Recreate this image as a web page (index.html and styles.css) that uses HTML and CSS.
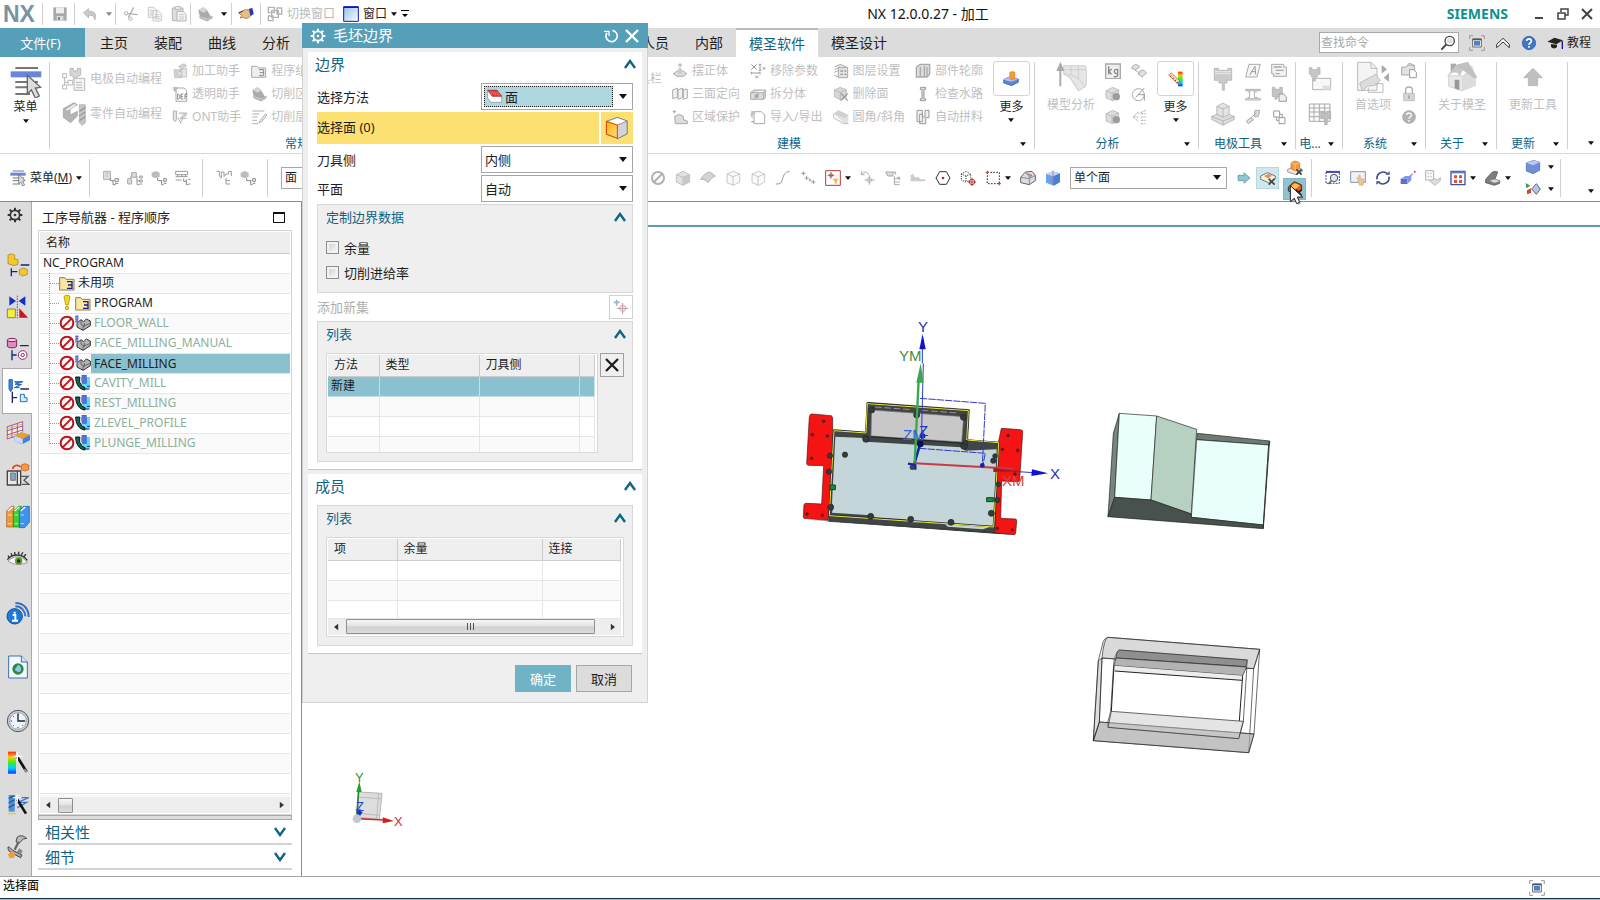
FILE: index.html
```html
<!DOCTYPE html>
<html lang="zh-CN">
<head>
<meta charset="utf-8">
<title>NX 12.0.0.27 - 加工</title>
<link rel="stylesheet" href="styles.css">
</head>
<body>
<svg class="defs" aria-hidden="true">
<defs>
<linearGradient id="gBlue" x1="0" y1="0" x2="1" y2="1"><stop offset="0" stop-color="#8fc0ee"/><stop offset="1" stop-color="#fff"/></linearGradient>
<linearGradient id="gRain" x1="0" y1="0" x2="0" y2="1"><stop offset="0" stop-color="#f22"/><stop offset=".25" stop-color="#fc0"/><stop offset=".5" stop-color="#3e3"/><stop offset=".75" stop-color="#0cf"/><stop offset="1" stop-color="#13f"/></linearGradient>
<linearGradient id="gOr" x1="0" y1="0" x2="1" y2="1"><stop offset="0" stop-color="#ffb400"/><stop offset="1" stop-color="#ffe08a"/></linearGradient>
</defs>
<symbol id="down" viewBox="0 0 8 5"><path d="M0 0h8L4 5z" fill="currentColor"/></symbol>
<symbol id="chevU" viewBox="0 0 12 10"><path d="M1 9L6 2l5 7" fill="none" stroke="#0f6385" stroke-width="2.4"/></symbol>
<symbol id="chevD" viewBox="0 0 12 10"><path d="M1 1l5 7 5-7" fill="none" stroke="#0f6385" stroke-width="2.4"/></symbol>
<symbol id="save" viewBox="0 0 48 48"><path d="M4 4h40v40H4z" fill="#a8a8a8"/><path d="M12 4h24v18H12z" fill="#eee"/><path d="M14 30h20v14H14z" fill="#ddd"/><path d="M18 33h6v9h-6z" fill="#888"/></symbol>
<symbol id="undo" viewBox="0 0 48 48"><path d="M4 20L20 8v8c16-2 26 8 18 26 0-10-8-16-18-14v8z" fill="#c9c9c9" stroke="#aaa" stroke-width="2"/></symbol>
<symbol id="cut" viewBox="0 0 48 48"><path d="M12 22l32 4M16 34L32 4" stroke="#b0b0b0" stroke-width="4"/><circle cx="9" cy="22" r="5" fill="none" stroke="#b0b0b0" stroke-width="3"/><circle cx="22" cy="38" r="5" fill="none" stroke="#b0b0b0" stroke-width="3"/></symbol>
<symbol id="copy" viewBox="0 0 48 48"><g fill="#f4f4f4" stroke="#b5b5b5" stroke-width="2"><path d="M4 4h16l8 8v22H4zM18 14h16l9 9v22H18z"/><path d="M9 14h8m-8 7h8m-8 6h8M24 26h12m-12 6h14m-14 6h14"/></g></symbol>
<symbol id="paste" viewBox="0 0 48 48"><g fill="#f4f4f4" stroke="#b5b5b5" stroke-width="3"><path d="M4 6h32v38H4z" fill="#ddd"/><path d="M12 2h16v8H12zM18 16h18l9 9v20H18z"/><path d="M24 26h14m-14 7h15m-15 6h15" stroke-width="2"/></g></symbol>
<symbol id="block" viewBox="0 0 48 48"><path d="M4 12l16-8 10 8 12 20-12 6L8 30z" fill="#aaa"/><path d="M4 12l16-8 10 10-10 6z" fill="#d5d5d5"/><path d="M28 40l18-10v6L30 46 8 36v-6z" fill="#bbb" stroke="#999" stroke-width="1"/></symbol>
<symbol id="hand" viewBox="0 0 48 48"><path d="M2 22c12-8 20-14 32-10l4 18c-8 8-16 10-22 4L6 36l6-8z" fill="#e9bd84" stroke="#8a6128" stroke-width="2"/><path d="M2 20l12-4" stroke="#333" stroke-width="3"/><path d="M33 8l10-2 4 18-9 6z" fill="#2934b4"/></symbol>
<symbol id="wins" viewBox="0 0 48 48"><g fill="#fff" stroke="#b4b4b4" stroke-width="4"><path d="M4 4h18v16H4zM30 6h14v18H30zM4 30h14v14H4zM14 14h20v20H14z"/></g></symbol>
<symbol id="win" viewBox="0 0 48 48"><path d="M2 2h44v44H2z" fill="url(#gBlue)" stroke="#1018b8" stroke-width="3"/><path d="M2 4h44" stroke="#1018b8" stroke-width="4"/></symbol>
<symbol id="menu" viewBox="0 0 48 48"><path d="M8 3h34M8 24h34M8 32h34M8 42h22" stroke="#777" stroke-width="3"/><path d="M1 8h46v9H1z" fill="#6a86da"/><path d="M26 14l20 18-8 1 6 12-6 3-6-12-6 6z" fill="#ddd" stroke="#666" stroke-width="2"/></symbol>
<symbol id="eprog" viewBox="0 0 72 72"><g fill="#d6d6d6" stroke="#b8b8b8" stroke-width="3"><path d="M24 4h10v8h12V4h10v20l-12 6v10h-8V30l-12-6z"/><path d="M36 34h32v36H36z" fill="#f4f4f4"/><path d="M2 20h12v12H2zM2 54h12v12H2zM18 40h14v14H18zM8 32v22M8 46h10M42 46h18m-18 8h18m-18 8h18" fill="none"/></g></symbol>
<symbol id="pprog" viewBox="0 0 72 72"><path d="M4 20L36 2l10 6-22 14v18l22-12v14L26 62 4 46z" fill="#b5b5b5" stroke="#999" stroke-width="2"/><path d="M14 24L40 8" stroke="#eee" stroke-width="6"/><path d="M52 8h18v54l-9 8-9-8z" fill="#c6c6c6" stroke="#aaa" stroke-width="2"/><path d="M52 28l18-12M52 42l18-12M52 56l18-12" stroke="#999" stroke-width="4"/></symbol>
<symbol id="asst" viewBox="0 0 48 48"><path d="M6 20h24v24H8zM20 10l16-8 8 6-16 12z" fill="#d2d2d2" stroke="#b4b4b4" stroke-width="2"/><path d="M14 32l10-8 6 8-6 8zM30 20l14-4v26H30" fill="#e4e4e4" stroke="#b4b4b4" stroke-width="2"/></symbol>
<symbol id="def" viewBox="0 0 48 48"><path d="M12 6h24l8 8v32H12z" fill="#fff" stroke="#aaa" stroke-width="3"/><path d="M2 6h16M4 12h10M8 2v14" stroke="#aaa" stroke-width="3"/><path d="M17 24v16M17 25h3c5 1 5 13 0 14h-3M34 24h-7v15h7M27 31h6M46 24h-7v16M39 31h6" fill="none" stroke="#888" stroke-width="3"/></symbol>
<symbol id="ont" viewBox="0 0 48 48"><path d="M4 6h10v26l-5 6-5-6zM20 12h24L24 28h20M26 40c6-16 12-20 20-24M18 26l10 18" fill="#c4c4c4" fill-opacity=".5" stroke="#b4b4b4" stroke-width="3"/></symbol>
<symbol id="foldG" viewBox="0 0 48 48"><path d="M2 10h16l4 5h22v28H2z" fill="#eee" stroke="#aaa" stroke-width="3"/><path d="M24 20h14v18H24M26 29h12" fill="none" stroke="#888" stroke-width="3"/></symbol>
<symbol id="layers" viewBox="0 0 48 48"><path d="M4 6h36M4 15h22M4 24h16M4 34h14M4 44h18M44 14L28 34l-4 8 8-4 16-20z" fill="#eee" stroke="#b0b0b0" stroke-width="3"/></symbol>
<symbol id="stand" viewBox="0 0 48 48"><path d="M24 2v26M18 8l6-6 6 6M4 32l12-8h18l10 8-10 8H14z" fill="#ddd" stroke="#aaa" stroke-width="3"/><path d="M18 18h12v14H18z" fill="#ccc"/></symbol>
<symbol id="three" viewBox="0 0 48 48"><path d="M2 12l14-6v28L2 38zM18 12l14-6v28l-14 6zM34 10h12v26l-12 4z" fill="#f2f2f2" stroke="#aaa" stroke-width="3"/></symbol>
<symbol id="zone" viewBox="0 0 48 48"><path d="M2 8h10M7 3v10M8 22l14-6 12 6v10l12 4v8H10z" fill="#ddd" stroke="#aaa" stroke-width="3"/></symbol>
<symbol id="xparam" viewBox="0 0 48 48"><path d="M4 4l16 16M20 4L4 20M26 4h8M30 4v18M26 22h8M4 30h26M4 26v8M30 26v8M38 12l8 8M46 12l-8 8M16 38l8 8M24 38l-8 8" fill="none" stroke="#999" stroke-width="3"/></symbol>
<symbol id="split" viewBox="0 0 48 48"><path d="M2 20l10-8h34v24l-6 4H2zM2 20h38l6-8M40 20v20" fill="#ddd" stroke="#aaa" stroke-width="3"/><path d="M14 26l12-4v12l-12 4z" fill="#aaa"/></symbol>
<symbol id="impexp" viewBox="0 0 48 48"><path d="M12 8h22l10 10v26H12z" fill="#fff" stroke="#aaa" stroke-width="3"/><path d="M4 6h12v8L8 18v12L2 20z" fill="#c0c0c0"/><path d="M4 38h8" stroke="#aaa" stroke-width="4"/></symbol>
<symbol id="layerset" viewBox="0 0 48 48"><path d="M4 12l18-8 18 8M4 20l18-8M4 28l14-6M4 36l12 6M16 14h28v30H16z" fill="#e4e4e4" stroke="#aaa" stroke-width="3"/><path d="M22 24h8M22 34h8M34 24h6M34 34h6" stroke="#999" stroke-width="4"/></symbol>
<symbol id="cubeX" viewBox="0 0 48 48"><path d="M4 12l18-8 18 8v20l-18 10L4 32z" fill="#d8d8d8" stroke="#aaa" stroke-width="2"/><path d="M4 12l18 8 18-8M22 20v22" fill="none" stroke="#aaa" stroke-width="2"/><path d="M24 22l20 22M44 22L24 44" stroke="#999" stroke-width="4"/></symbol>
<symbol id="fillet" viewBox="0 0 48 48"><path d="M2 14L16 4l30 14v26H34z" fill="#e2e2e2"/><path d="M2 14L16 4l30 14-10 10z" fill="#d0d0d0"/><path d="M2 14v12l30 18h14" fill="none" stroke="#bbb" stroke-width="3"/></symbol>
<symbol id="contour" viewBox="0 0 48 48"><path d="M4 12l12-8h28v30l-8 8H4zM16 12v30M28 8v34M36 12v30" fill="#ddd" stroke="#aaa" stroke-width="4"/></symbol>
<symbol id="water" viewBox="0 0 48 48"><path d="M16 4h16v6h-5v28h5v6H16v-6h5V10h-5z" fill="#ddd" stroke="#999" stroke-width="3"/></symbol>
<symbol id="nest" viewBox="0 0 48 48"><path d="M6 4v34h8V16h8v22H14v6h18V26h10V4H30v20h-8V4z" fill="#eee" stroke="#999" stroke-width="3"/></symbol>
<symbol id="moreA" viewBox="0 0 48 48"><path d="M2 26l16-8 28 6v10L26 44 2 36z" fill="#5b87d2" stroke="#2c55a5" stroke-width="2"/><path d="M2 26l16-8 28 6-20 8z" fill="#a9c6f2"/><path d="M20 4l8-3 8 3v20l-8 3-8-3z" fill="#f29a3a" stroke="#c46a12" stroke-width="1"/></symbol>
<symbol id="moreB" viewBox="0 0 48 48"><path d="M30 2h14v44H30z" fill="url(#gRain)"/><path d="M2 12l8-6 26 24-8 8z" fill="#ffe2ae" stroke="#a44" stroke-width="2"/><path d="M10 14l-3 4M17 20l-3 4M24 26l-3 4M30 32l-3 4" stroke="#822" stroke-width="3"/></symbol>
<symbol id="model" viewBox="0 0 96 96"><path d="M26 14h66c4 30 4 50 0 62L70 90C56 60 44 46 26 40z" fill="#e6e6e6" stroke="#c0c0c0" stroke-width="2"/><path d="M26 26h66M26 38c30 2 50 14 64 42M48 14v28M70 14v40M40 44L70 88" fill="none" stroke="#c4c4c4" stroke-width="2"/><path d="M16 2l12 28H19v46h-6V30H4z" fill="#aaa"/></symbol>
<symbol id="kg" viewBox="0 0 48 48"><path d="M2 3h44v44H2z" fill="#eee" stroke="#aaa" stroke-width="4"/><path d="M11 10v24M20 18l-9 8 9 8M38 20c-10-5-14 10-4 12 4 0 4-2 4-4M38 18v18c0 6-8 6-12 4" fill="none" stroke="#888" stroke-width="4"/></symbol>
<symbol id="cubeB" viewBox="0 0 48 48"><path d="M3 14l20-10 18 8v22L23 44 3 36z" fill="#ddd" stroke="#aaa" stroke-width="2"/><path d="M3 14l18 8 20-10M21 22v22" fill="none" stroke="#aaa" stroke-width="2"/><circle cx="34" cy="32" r="11" fill="#9c9c9c"/></symbol>
<symbol id="cubeG" viewBox="0 0 48 48"><path d="M4 14l20-10 20 10v22L24 46 4 36z" fill="#e2e2e2" stroke="#aaa" stroke-width="2"/><path d="M4 14l20 8 20-8M24 22v24" fill="none" stroke="#aaa" stroke-width="2"/><path d="M24 22l20-8v22L24 46z" fill="#c8c8c8"/></symbol>
<symbol id="domes" viewBox="0 0 48 48"><path d="M2 16C6 2 20 2 26 12l-12 8zM22 34c4-16 18-16 24-4l-12 12z" fill="#e0e0e0" stroke="#aaa" stroke-width="3"/><path d="M12 22l14 8" stroke="#aaa" stroke-width="3"/></symbol>
<symbol id="gauge" viewBox="0 0 48 48"><circle cx="22" cy="26" r="18" fill="#fff" stroke="#aaa" stroke-width="3"/><path d="M14 34L40 6M22 26h18v18" fill="none" stroke="#999" stroke-width="3"/></symbol>
<symbol id="arrows" viewBox="0 0 48 48"><path d="M44 4L22 14M22 8l-14 16 14 14M6 24h16M30 14h14M30 24h14M30 34h14M30 44h14" fill="none" stroke="#aaa" stroke-width="3" stroke-dasharray="7 3"/></symbol>
<symbol id="elec" viewBox="-6 0 72 72"><path d="M4 4h12v6h28V4h12v36H42v8H34v22h-6V48H18v-8H4z" fill="#cbcbcb" stroke="#aaa" stroke-width="2"/><path d="M6 14h48M6 20h48" stroke="#e8e8e8" stroke-width="3"/></symbol>
<symbol id="tower" viewBox="0 0 66 66"><path d="M2 40l31-14 31 14v8L33 64 2 48z" fill="#ddd" stroke="#aaa" stroke-width="2"/><path d="M2 40l31 12 31-12M33 52v12" fill="none" stroke="#aaa" stroke-width="2"/><path d="M16 12L33 3l17 9v22l-17 8-17-8z" fill="#e4e4e4" stroke="#aaa" stroke-width="2"/><path d="M16 12l17 7 17-7M33 19v22" fill="none" stroke="#aaa" stroke-width="2"/></symbol>
<symbol id="noteA" viewBox="0 0 48 48"><path d="M12 4h34L36 42H2z" fill="#f6f6f6" stroke="#aaa" stroke-width="3"/><path d="M14 36l16-26 2 24M20 26h12" fill="none" stroke="#999" stroke-width="3"/></symbol>
<symbol id="plates" viewBox="0 0 48 48"><path d="M2 10h44v4H2zM2 38h44v4H2zM14 16v18h-6M28 16v18h10M28 18h8M14 18H8" fill="none" stroke="#b0b0b0" stroke-width="3"/></symbol>
<symbol id="chain" viewBox="0 0 48 48"><path d="M30 4h14l-4 18H28zM4 36l14-10 8 6-16 12zM18 26l16-14" fill="#ddd" stroke="#aaa" stroke-width="3"/></symbol>
<symbol id="cards" viewBox="0 0 48 48"><path d="M2 4h36v8h8v28H8v-8H2z" fill="#f2f2f2" stroke="#aaa" stroke-width="3"/><path d="M8 12h24M14 22h24M14 32h12" stroke="#aaa" stroke-width="4"/></symbol>
<symbol id="elec2" viewBox="0 0 48 48"><path d="M4 4h8v6h14V4h8v20h-8v8h-8v8h-6v-8H4z" fill="#c4c4c4" stroke="#aaa" stroke-width="2"/><path d="M24 24h14l8 8v14H24z" fill="#eee" stroke="#999" stroke-width="3"/></symbol>
<symbol id="sqs" viewBox="0 0 48 48"><path d="M8 6h18v18H8zM24 26h18v18H24zM16 24v10h8M26 16h8v10" fill="none" stroke="#999" stroke-width="3"/></symbol>
<symbol id="edoc" viewBox="0 0 72 72"><path d="M14 34h54v34H14z" fill="#f8f8f8" stroke="#b4b4b4" stroke-width="3"/><path d="M44 56h24v12H44z" fill="#ddd"/><path d="M4 2h8v6h16V2h8v20h-8v8h-6v12h-6V30h-6v-8H4z" fill="#c6c6c6" stroke="#aaa" stroke-width="2"/></symbol>
<symbol id="etab" viewBox="0 0 72 72"><path d="M4 6h62v52H4zM4 18h62M4 30h62M4 44h62M18 6v52M34 6v52M50 6v52" fill="#fafafa" stroke="#aaa" stroke-width="3"/><path d="M38 28h8v6h12v-6h10v22H58v18h-8V50H38z" fill="#bfbfbf" stroke="#aaa" stroke-width="2"/></symbol>
<symbol id="pref" viewBox="0 0 96 96"><path d="M2 4h40l18 18v66H2z" fill="#f4f4f4" stroke="#bbb" stroke-width="3"/><path d="M42 4v18h18" fill="none" stroke="#bbb" stroke-width="3"/><path d="M8 66l26-14 22-12 14 18-12 14-26 4-16 14z" fill="#dcdcdc" stroke="#aaa" stroke-width="2"/><path d="M54 68h24v26H34V80" fill="none" stroke="#bbb" stroke-width="3"/><path d="M74 12v26l16-13zM96 36v26L80 50z" fill="#aaa"/></symbol>
<symbol id="foldx" viewBox="0 0 48 48"><path d="M2 12h14l4-6h20v30H2z" fill="#e2e2e2" stroke="#aaa" stroke-width="3"/><path d="M26 20h12l8 8v16H26z" fill="#fff" stroke="#999" stroke-width="3"/><path d="M20 4c6-4 14-2 16 6" fill="none" stroke="#999" stroke-width="3"/></symbol>
<symbol id="lock" viewBox="0 0 48 48"><path d="M14 22V12c0-12 20-12 20 0v10" fill="none" stroke="#aaa" stroke-width="4"/><path d="M8 22h32v22H8z" fill="#d6d6d6" stroke="#aaa" stroke-width="2"/><path d="M24 28v10" stroke="#999" stroke-width="4"/></symbol>
<symbol id="helpG" viewBox="0 0 48 48"><circle cx="24" cy="24" r="19" fill="#b4b4b4" stroke="#999" stroke-width="2"/><path d="M17 18c1-8 15-8 14 1 0 5-7 5-7 10M24 33v5" fill="none" stroke="#fff" stroke-width="4"/></symbol>
<symbol id="help" viewBox="0 0 48 48"><circle cx="24" cy="24" r="20" fill="#3f76c8" stroke="#27549c" stroke-width="2"/><path d="M17 18c1-9 15-8 14 1 0 5-7 5-7 10M24 33v5" fill="none" stroke="#fff" stroke-width="5"/></symbol>
<symbol id="house" viewBox="0 0 96 96"><path d="M14 8h16v26H14z" fill="#aaa"/><path d="M8 44v32l42 14V44z" fill="#e8e8e8" stroke="#c4c4c4" stroke-width="2"/><path d="M50 46l28-34 12 38v24L50 90z" fill="#dcdcdc"/><path d="M2 48L30 12l32-8-20 40c-4-4-16-14-18-12z" fill="#c8c8c8"/><path d="M30 12l36-10 28 48-10 2z" fill="#c0c0c0"/><path d="M26 56h14v32l-14-6z" fill="#999"/></symbol>
<symbol id="upA" viewBox="0 0 60 60"><path d="M30 4l28 28H44v24H16V32H2z" fill="#c0c0c0" stroke="#aaa" stroke-width="2"/></symbol>
<symbol id="srch" viewBox="0 0 48 48"><circle cx="29" cy="18" r="14" fill="#fff" stroke="#444" stroke-width="4"/><circle cx="29" cy="18" r="8" fill="#ddd"/><path d="M19 28L4 44" stroke="#444" stroke-width="6"/></symbol>
<symbol id="full" viewBox="0 0 48 48"><path d="M2 12V2h10M36 2h10v10M46 36v10H36M12 46H2V36" fill="none" stroke="#999" stroke-width="3"/><path d="M11 12h26v24H11z" fill="#fff" stroke="#666" stroke-width="3"/><path d="M15 18h18v14H15z" fill="#4b83c8"/><path d="M11 11h26v5H11z" fill="#555"/></symbol>
<symbol id="roof" viewBox="0 0 48 48"><path d="M5 28L24 10l19 18v10L24 21 5 38z" fill="#fff" stroke="#333" stroke-width="3"/></symbol>
<symbol id="hat" viewBox="0 0 48 48"><path d="M1 20L22 8l26 8-20 12zM12 27v9c6 6 14 5 18 0v-7z" fill="#222"/><path d="M46 18v24" stroke="#1a1aa8" stroke-width="4"/></symbol>
<symbol id="gear" viewBox="0 0 48 48"><circle cx="24" cy="24" r="14" fill="none" stroke="currentColor" stroke-width="5"/><path d="M24 2v8M24 38v8M2 24h8M38 24h8M8 8l6 6M34 34l6 6M8 40l6-6M34 14l6-6" stroke="currentColor" stroke-width="6"/><circle cx="24" cy="24" r="4" fill="currentColor"/></symbol>
<symbol id="reset" viewBox="0 0 48 48"><path d="M12 14A17 17 0 1 0 28 7" fill="none" stroke="#fff" stroke-width="5"/><path d="M3 10h15v14" fill="none" stroke="#fff" stroke-width="4"/></symbol>
<symbol id="close" viewBox="0 0 48 48"><path d="M6 6l36 36M42 6L6 42" stroke="currentColor" stroke-width="7"/></symbol>
<symbol id="t1" viewBox="0 0 48 48"><path d="M2 4h20v24H2zM8 10h8m-8 8h8" fill="#e4e4e4" stroke="#aaa" stroke-width="3"/><path d="M22 24v8h12M30 32v12h8M36 26h10v8H36zM36 40h10" fill="none" stroke="#888" stroke-width="3"/></symbol>
<symbol id="t2" viewBox="0 0 48 48"><path d="M2 26h12v16H2zM14 8h14v14H14zM8 26l8-12" fill="#ddd" stroke="#aaa" stroke-width="3"/><path d="M30 20v24h8M30 32h8M38 18h8v6h-8zM38 30h8v6h-8zM38 42h8" fill="none" stroke="#999" stroke-width="3"/></symbol>
<symbol id="t3" viewBox="0 0 48 48"><path d="M2 8l12-5 12 5v12l-12 5-12-5z" fill="#bbb"/><path d="M20 24v8h12M32 30v14h6M38 26h8v8h-8zM38 40h8" fill="none" stroke="#888" stroke-width="3"/></symbol>
<symbol id="t4" viewBox="0 0 48 48"><path d="M2 4h36v10H2zM2 20h36M8 14v6M20 14v6M32 14v6M2 30h18" fill="none" stroke="#999" stroke-width="3"/><path d="M26 26v8h8M34 28v16h6M40 28h6M40 42h6" fill="none" stroke="#888" stroke-width="3"/></symbol>
<symbol id="t5" viewBox="0 0 48 48"><path d="M2 4h8v14l6 6V6h8v14l6-8h8V4h8v14M30 24v18h12M30 32h12" fill="none" stroke="#999" stroke-width="3"/></symbol>
<symbol id="ban" viewBox="0 0 48 48"><circle cx="24" cy="24" r="18" fill="none" stroke="#b0b0b0" stroke-width="6"/><path d="M12 36l24-24" stroke="#b0b0b0" stroke-width="6"/></symbol>
<symbol id="face" viewBox="0 0 48 48"><path d="M2 28C10 14 22 6 30 6l16 12c-8 4-16 10-22 20-6-8-12-10-22-10z" fill="#d4d4d4" stroke="#999" stroke-width="2"/></symbol>
<symbol id="cubeO" viewBox="0 0 48 48"><path d="M6 12l20-8 18 8v24L26 46 6 38z" fill="#fafafa" stroke="#b0b0b0" stroke-width="2"/><path d="M6 12l18 8 20-8M24 20v26" fill="none" stroke="#b0b0b0" stroke-width="2"/></symbol>
<symbol id="curve" viewBox="0 0 48 48"><path d="M2 42c32 4 10-34 42-38" fill="none" stroke="#999" stroke-width="3"/></symbol>
<symbol id="pts" viewBox="0 0 48 48"><path d="M4 10h12M10 4v12M14 24h12M20 18v12M34 36h12M40 30v12M26 30h8M30 26v8" stroke="#999" stroke-width="3"/></symbol>
<symbol id="snap" viewBox="0 0 48 48"><path d="M2 2h44v44H2z" fill="#fff" stroke="#b83a3a" stroke-width="3"/><path d="M8 16h20M18 6v20" stroke="#333" stroke-width="2"/><circle cx="18" cy="16" r="5" fill="none" stroke="#b33" stroke-width="2"/><path d="M22 26h20l-7 8v9l-6-4v-5z" fill="#f3b54a"/></symbol>
<symbol id="rot" viewBox="0 0 48 48"><path d="M4 14C12 2 24 6 26 14M4 4v10h10M28 16v28M14 30h30" fill="none" stroke="#aaa" stroke-width="3"/><circle cx="28" cy="30" r="7" fill="none" stroke="#aaa" stroke-width="2"/></symbol>
<symbol id="tree3" viewBox="0 0 48 48"><path d="M2 6h22v12H8zM24 6h8v8M28 18v26M28 26h16M28 36h16M28 44h16M36 22h8v8" fill="#ddd" stroke="#aaa" stroke-width="3"/></symbol>
<symbol id="hill" viewBox="0 0 48 48"><path d="M2 34V16l8-4 4 10h12l6 6h14v6z" fill="#ccc"/></symbol>
<symbol id="hex" viewBox="0 0 48 48"><path d="M14 5h20l11 19-11 19H14L3 24z" fill="#fff" stroke="#333" stroke-width="3"/><circle cx="24" cy="24" r="4" fill="#c22"/></symbol>
<symbol id="dcube" viewBox="0 0 48 48"><path d="M4 12L18 4l14 8v18l-14 6-14-6zM4 12l14 6 14-6M18 18v18" fill="none" stroke="#333" stroke-width="3" stroke-dasharray="3 3"/><circle cx="36" cy="36" r="8" fill="#fff" stroke="#b33" stroke-width="3"/><path d="M36 24v24M24 36h24" stroke="#b33" stroke-width="3"/></symbol>
<symbol id="rsel" viewBox="0 0 48 48"><path d="M7 7h36v34H7z" fill="none" stroke="#333" stroke-width="3" stroke-dasharray="5 4"/><path d="M2 7h10M7 2v10M38 41h10M43 36v10" stroke="#c33" stroke-width="3"/></symbol>
<symbol id="sol" viewBox="0 0 48 48"><path d="M2 22L16 6l20-2 10 12v16L28 44 2 38z" fill="#d8dde0" stroke="#666" stroke-width="3"/><path d="M2 22l26 4 18-10M28 26v18" fill="none" stroke="#666" stroke-width="2"/><path d="M18 10l18 6-8 8" fill="#b9c" stroke="#b44" stroke-width="2"/></symbol>
<symbol id="bcube" viewBox="0 0 48 48"><path d="M3 12l20-8 22 6v26L26 47 3 38z" fill="#6aa2ec"/><path d="M3 12l20-8 22 6-19 9z" fill="#bdd8f8"/><path d="M26 19l19-9v26L26 47z" fill="#4a7fd8"/><path d="M24 2v42" stroke="#c55" stroke-width="2"/></symbol>
<symbol id="rarr" viewBox="0 0 48 48"><path d="M6 16h18V8l18 16-18 16v-8H6z" fill="#8cc7cf" stroke="#4f8e99" stroke-width="2"/></symbol>
<symbol id="selX" viewBox="0 0 48 48"><path d="M2 18l20-10 24 10v8L26 38 2 28z" fill="#f6f0ea" stroke="#777" stroke-width="3"/><path d="M12 18l14-6 10 5-12 8z" fill="#ef8a40"/><path d="M26 26l18 18M44 26L26 44" stroke="#444" stroke-width="5"/></symbol>
<symbol id="selC" viewBox="0 0 48 48"><path d="M2 28l20-8 24 8v6L26 44 2 36z" fill="#f3e4d6" stroke="#777" stroke-width="2"/><path d="M12 8l12-5 14 5v18l-14 6-12-6z" fill="#f59a3e" stroke="#c56f1c" stroke-width="2"/><path d="M12 8l13 5 13-5M25 13v18" fill="none" stroke="#ffd9a0" stroke-width="2"/><path d="M28 28l16 16M44 28L28 44" stroke="#444" stroke-width="5"/></symbol>
<symbol id="selR" viewBox="0 0 48 48"><path d="M4 18L22 2l22 10v14L26 40 4 30z" fill="#e8591d" stroke="#333" stroke-width="3"/><path d="M12 16l12-9 14 6-12 12z" fill="#ffc24a"/><path d="M26 26l18 18M44 26L26 44" stroke="#222" stroke-width="5"/></symbol>
<symbol id="v1" viewBox="0 0 48 48"><path d="M3 4h40v36H3z" fill="none" stroke="#3a46b0" stroke-width="3" stroke-dasharray="6 3"/><path d="M3 3h42v6H3z" fill="#4450b4"/><circle cx="27" cy="24" r="11" fill="#dbe8f4" stroke="#555" stroke-width="3"/><path d="M19 32l-8 10" stroke="#555" stroke-width="4"/></symbol>
<symbol id="v2" viewBox="0 0 48 48"><path d="M2 5h44v32H2z" fill="#f0f3fa" stroke="#8890b0" stroke-width="3"/><path d="M20 22l6 4V16h5v10h8l4 4-4 16H28z" fill="#ecc48c" stroke="#b98c50" stroke-width="1"/></symbol>
<symbol id="v3" viewBox="0 0 48 48"><path d="M6 28C4 8 26 0 38 12M42 20c2 20-20 28-32 16" fill="none" stroke="#3d4e8e" stroke-width="5"/><path d="M32 14h12V4zM16 34H4v10z" fill="#3d4e8e"/></symbol>
<symbol id="v4" viewBox="0 0 48 48"><path d="M2 26h20v16H2z" fill="#5a72cc"/><path d="M2 26l14-8h18L22 26zM22 26l12-8v12L22 42z" fill="#8396e0"/><path d="M28 20l10-9" stroke="#8396e0" stroke-width="4"/><circle cx="44" cy="5" r="3" fill="#c33"/></symbol>
<symbol id="v5" viewBox="0 0 48 48"><path d="M2 2h24v28H2zM8 10h4m4 0h4M8 20h4m4 0h4" fill="#fafafa" stroke="#b0b0b0" stroke-width="3"/><path d="M14 34l14-8 10 4 8-8v10L30 46z" fill="#ddd" stroke="#aaa" stroke-width="2"/></symbol>
<symbol id="v6" viewBox="0 0 48 48"><path d="M3 4h42v40H3z" fill="#fff" stroke="#3b52a8" stroke-width="4"/><path d="M3 4h42v6H3z" fill="#5c79cc"/><path d="M12 16h9v9h-9zM27 16h9v9h-9zM12 30h9v9h-9zM27 30h9v9h-9z" fill="#e0523c"/></symbol>
<symbol id="v7" viewBox="0 0 48 48"><path d="M2 28L20 8c4-4 14-4 18-2l-8 22 14 4v8L28 46 2 38z" fill="#7b7f80" stroke="#444" stroke-width="2"/><path d="M14 32l16-4 14 6-16 4z" fill="#ddd"/></symbol>
<symbol id="v8" viewBox="0 0 48 48"><path d="M4 12l22-8 18 6v24L24 44 4 36z" fill="#6f8fd8" stroke="#4560a8" stroke-width="2"/><path d="M4 12l22-8 18 6-20 9z" fill="#b8caf2"/></symbol>
<symbol id="v9" viewBox="0 0 48 48"><path d="M2 6l14 8L4 22z" fill="#3a9a4a"/><path d="M6 28l12-6v14l-12 4z" fill="#c43"/><path d="M20 24L34 8l12 16-12 16z" fill="#b6c4e8" stroke="#667" stroke-width="3"/></symbol>
<symbol id="fold" viewBox="0 0 48 48"><path d="M2 8h15l4 5h24v32H2z" fill="#f7e7a0" stroke="#8f8040" stroke-width="3"/><path d="M24 20h15v20H24M27 30h12" fill="none" stroke="#1c1c90" stroke-width="4"/></symbol>
<symbol id="excl" viewBox="0 0 48 48"><path d="M15 4c4-4 14-4 18 0l-5 26h-8z" fill="#f4d81e" stroke="#9a8600" stroke-width="2"/><circle cx="24" cy="39" r="5" fill="#f4d81e" stroke="#9a8600" stroke-width="2"/></symbol>
<symbol id="no" viewBox="0 0 48 48"><circle cx="24" cy="24" r="19" fill="#fff" stroke="#c0121a" stroke-width="6"/><path d="M11 37l26-26" stroke="#c0121a" stroke-width="6"/></symbol>
<symbol id="mill" viewBox="0 0 48 48"><path d="M6 24l12-10 8 6 8-8 12 6v14L24 46 6 36z" fill="#b4b4b4" stroke="#333" stroke-width="3"/><path d="M18 16v12l10 6V24M24 46V34l20-8" fill="none" stroke="#444" stroke-width="2"/><path d="M1 1h9v22H1z" fill="#8a96e0"/><path d="M1 5h9M1 12h9M1 19h9" stroke="#3038a0" stroke-width="2"/></symbol>
<symbol id="cav" viewBox="0 0 48 48"><path d="M16 6h29v38H26z" fill="#59dfee"/><path d="M2 6h12v16l8 12 8 4v7C12 44 2 26 2 6z" fill="#14605a" stroke="#111" stroke-width="3"/><path d="M20 0h15v26H20z" fill="#4058c8"/><path d="M24 2v22M30 2v22" stroke="#8fa2f0" stroke-width="2"/><path d="M36 34h9M30 42h12" stroke="#1a2ab0" stroke-width="3"/></symbol>
<symbol id="r1" viewBox="0 0 72 72"><path d="M6 6l10-4 10 4v12l10 2v14l-12 4-18-6z" fill="#f6c62e" stroke="#a07c10" stroke-width="2"/><path d="M16 46v24M16 56h18M44 36h26" stroke="#112a70" stroke-width="4"/><path d="M40 50l12-5 12 5v14l-12 5-12-5z" fill="#f6c62e" stroke="#a07c10" stroke-width="2"/></symbol>
<symbol id="r2" viewBox="0 0 72 72"><path d="M10 4l20 14-20 14zM58 4L38 18l20 14z" fill="#1530c8"/><path d="M34 2v68" stroke="#222" stroke-width="2" stroke-dasharray="5 3"/><path d="M4 42h24v26H4z" fill="#f8ee3a" stroke="#555" stroke-width="2"/><path d="M40 40l26 28H40z" fill="#c4181c"/></symbol>
<symbol id="r3" viewBox="0 0 72 72"><path d="M4 10v18c4 6 24 6 28 0V10z" fill="#e28ac0" stroke="#7e2060" stroke-width="3"/><ellipse cx="18" cy="9" rx="14" ry="5" fill="#f8cfe6" stroke="#7e2060" stroke-width="3"/><path d="M42 26h26M18 40v30M18 54h14" stroke="#112a70" stroke-width="4"/><circle cx="50" cy="54" r="13" fill="#fff" stroke="#8e2a70" stroke-width="3"/><circle cx="50" cy="54" r="5" fill="none" stroke="#8e2a70" stroke-width="3"/></symbol>
<symbol id="r4" viewBox="0 0 72 72"><path d="M6 2h10v28l-5 8-5-8zM22 8h26L24 16h20L22 26h16" fill="#3a86d0" stroke="#2a66b0" stroke-width="3"/><path d="M40 30h26M16 38v34M16 56h14" stroke="#1a2a50" stroke-width="4"/><path d="M40 46h12v10h8v12H40z" fill="#d8ecfa" stroke="#2a70b8" stroke-width="3"/></symbol>
<symbol id="r5" viewBox="0 0 72 72"><path d="M2 18L50 2v38L2 54z" fill="#fff1da"/><path d="M2 18L50 2M2 30l48-15M2 42l48-15M2 54l30-9M4 18v36M18 13v36M34 8v34M50 2v30" fill="none" stroke="#8a5aa0" stroke-width="3"/><path d="M2 24l48-15M2 48l36-11" stroke="#f0a050" stroke-width="3"/><path d="M26 44l20-10 26 8v16L48 70 26 60z" fill="#3f83dc"/><path d="M26 44l20-10 26 8-22 12z" fill="#f39a2d"/><path d="M26 44l24 10v16L26 60z" fill="#c8dcf4"/></symbol>
<symbol id="r6" viewBox="0 0 72 72"><path d="M4 24h40v42H4z" fill="#e8e8e8" stroke="#444" stroke-width="4"/><path d="M14 30h14v22H14z" fill="#86a8c8" stroke="#555" stroke-width="2"/><path d="M34 24v42" stroke="#444" stroke-width="4"/><path d="M20 18C22 6 36 4 44 12" fill="none" stroke="#e0421a" stroke-width="5"/><path d="M46 6l10-4 12 4v14l-12 4-10-4z" fill="#f79a3a" stroke="#c4481a" stroke-width="2"/><path d="M46 40h20L54 52l14 12H48" fill="none" stroke="#555" stroke-width="4"/></symbol>
<symbol id="r7" viewBox="0 0 72 72"><path d="M2 18L16 4h8L22 66H2z" fill="#ee9a3c" stroke="#a85a14" stroke-width="2"/><path d="M22 18L38 4h8l-6 62H22z" fill="#3ed032" stroke="#1a8218" stroke-width="2"/><path d="M40 18L52 4h18v48L56 68H40z" fill="#3d94ea" stroke="#1a58a8" stroke-width="2"/><path d="M6 18L20 6M26 18L40 6M44 18L58 6" stroke="#fff" stroke-width="4"/><path d="M5 30h12M26 30h10M44 30h10M5 56h12M26 56h10M44 56h10" stroke="#fff" stroke-width="2"/></symbol>
<symbol id="r8" viewBox="0 0 72 72"><path d="M6 42c16-16 42-18 58 4-20 10-42 8-58-4z" fill="#f4f4ec" stroke="#777" stroke-width="2"/><circle cx="38" cy="42" r="11" fill="#5f9a2a"/><circle cx="38" cy="42" r="5" fill="#1a2a0a"/><path d="M4 38C18 20 48 18 64 40M10 32l-4-6M18 26l-3-7M27 22l-1-7M37 21l2-7M46 23l5-7M54 28l6-6" fill="none" stroke="#333" stroke-width="4"/></symbol>
<symbol id="r9" viewBox="0 0 72 72"><circle cx="26" cy="46" r="23" fill="#1c7ad8" stroke="#0e4c96" stroke-width="3"/><path d="M26 32v6M20 42h8v16M18 59h18" stroke="#fff" stroke-width="6" fill="none"/><path d="M28 6c26 0 40 18 40 42M28 16c18 0 30 14 30 30" fill="none" stroke="#3a6fc0" stroke-width="6"/></symbol>
<symbol id="r10" viewBox="0 0 72 72"><path d="M8 3h38l18 18v48H8z" fill="#f4faff" stroke="#3c6eb0" stroke-width="3"/><path d="M46 3v18h18" fill="#cfe2f6" stroke="#3c6eb0" stroke-width="3"/><circle cx="36" cy="42" r="17" fill="#2d8c3c"/><path d="M36 29c-4 9-10 10-8 18l12 5c9-7 6-19-4-23z" fill="#8fc8ee"/></symbol>
<symbol id="r11" viewBox="0 0 72 72"><circle cx="36" cy="36" r="32" fill="#c8d0d6" stroke="#555" stroke-width="3"/><circle cx="36" cy="36" r="25" fill="#eef4fc" stroke="#888" stroke-width="2"/><path d="M36 14v22h20" fill="none" stroke="#222" stroke-width="4"/><path d="M36 14v4M36 54v4M14 36h4M54 36h4M22 22l2 2M22 50l2-2M50 50l-2-2" stroke="#334" stroke-width="3"/></symbol>
<symbol id="r12" viewBox="0 0 72 72"><path d="M6 2h24v66H6z" fill="url(#gRain)"/><path d="M34 18l28 44" stroke="#111" stroke-width="8"/><path d="M56 54l6 10" stroke="#999" stroke-width="6"/><path d="M34 4v26M22 16h26" stroke="#fff" stroke-width="4"/></symbol>
<symbol id="r13" viewBox="0 0 72 72"><path d="M8 6h18v50H8z" fill="#4a8fd8"/><path d="M8 16l18-8M8 30l18-10M8 44l18-10" stroke="#1f5ca8" stroke-width="4"/><path d="M30 14h38L36 28h26L34 44" fill="none" stroke="#3f7cc4" stroke-width="4"/><path d="M34 20l26 42" stroke="#111" stroke-width="8"/><path d="M34 4v24M22 14h24" stroke="#fff" stroke-width="4"/><path d="M6 62h24" stroke="#dcd23c" stroke-width="4"/></symbol>
<symbol id="r14" viewBox="0 0 72 72"><path d="M34 6c8-6 20-4 28 4l-10 2-14 14-8-6z" fill="#bbb" stroke="#444" stroke-width="3"/><path d="M38 20L26 44" stroke="#666" stroke-width="7"/><path d="M6 36c6 0 10 6 14 10l28 14-4 8-30-16C6 48 6 40 6 36z" fill="#aaa" stroke="#444" stroke-width="3"/><path d="M40 40l10 8-6 10-12-6z" fill="#888"/><path d="M6 58l10-8 12 6-4 12-14 2z" fill="#f0a030"/></symbol>
<symbol id="redf" viewBox="0 0 48 48"><path d="M2 4h28l14 16v20H12L2 28z" fill="#fff" stroke="#888" stroke-width="2"/><path d="M2 4h28l14 18H16z" fill="#dc3a3a" stroke="#a01818" stroke-width="2"/><path d="M8 8l28 4M12 14l28 4" stroke="#ffc0c0" stroke-width="2" stroke-dasharray="3 3"/></symbol>
<symbol id="facecube" viewBox="0 0 66 66"><path d="M4 15L34 4l27 10v35L36 62 4 50z" fill="#d4d4d8" stroke="#555" stroke-width="2"/><path d="M4 15L34 4l27 10-27 11z" fill="#fff" stroke="#777" stroke-width="2"/><path d="M4 15l30 10v36L4 50z" fill="url(#gOr)" stroke="#e24a14" stroke-width="3"/></symbol>
<symbol id="addset" viewBox="0 0 48 48"><path d="M2 10h18M11 2v18" stroke="#9fb0d6" stroke-width="5"/><path d="M12 28h34M29 12v34" stroke="#b09a9a" stroke-width="3"/><circle cx="29" cy="28" r="9" fill="none" stroke="#d8a0a0" stroke-width="3"/></symbol>
<symbol id="br" viewBox="0 0 10 20"><path d="M.5 0v20M1 10.500h9" fill="none" stroke="#999" stroke-dasharray="1 1"/></symbol>
<symbol id="brl" viewBox="0 0 10 20"><path d="M.5 0v11M1 10.500h9" fill="none" stroke="#999" stroke-dasharray="1 1"/></symbol>
<symbol id="tl" viewBox="0 0 6 8"><path d="M5 0v8L0 4z" fill="#333"/></symbol>
<symbol id="tr" viewBox="0 0 6 8"><path d="M1 0v8l5-4z" fill="#333"/></symbol>
</svg>

<header class="titlebar">
  <span class="nx">NX</span>
  <div class="quick q1"><button aria-label="保存"><svg class="i"><use href="#save"/></svg></button></div>
  <div class="quick q2"><button aria-label="撤消"><svg class="i"><use href="#undo"/></svg></button><svg class="dn dim"><use href="#down"/></svg></div>
  <div class="quick q3"><button aria-label="剪切"><svg class="i"><use href="#cut"/></svg></button><button aria-label="复制"><svg class="i"><use href="#copy"/></svg></button><button aria-label="粘贴"><svg class="i"><use href="#paste"/></svg></button></div>
  <div class="quick q4"><button aria-label="重复"><svg class="i"><use href="#block"/></svg></button><svg class="dn"><use href="#down"/></svg></div>
  <div class="quick q5"><button aria-label="触控"><svg class="i"><use href="#hand"/></svg></button></div>
  <div class="quick q6"><button class="off"><svg class="i"><use href="#wins"/></svg>切换窗口</button><button><svg class="i"><use href="#win"/></svg>窗口<svg class="dn"><use href="#down"/></svg></button><button aria-label="自定义" class="ov"><svg width="8" height="8" viewBox="0 0 8 8"><path d="M0 0h8v1H0zM1 4h6L4 7z"/></svg></button></div>
  <h1>NX 12.0.0.27 - 加工</h1>
  <div class="brand"><strong>SIEMENS</strong>
    <button aria-label="最小化"><svg width="12" height="12" viewBox="0 0 12 12"><path d="M2 10h8" stroke="#444" stroke-width="2"/></svg></button>
    <button aria-label="还原"><svg width="12" height="12" viewBox="0 0 12 12"><path d="M4 4V1h7v6H8M1 5h7v6H1z" fill="none" stroke="#444" stroke-width="1.500"/></svg></button>
    <button aria-label="关闭"><svg width="12" height="12" viewBox="0 0 12 12"><path d="M1 1l10 10M11 1L1 11" stroke="#444" stroke-width="2"/></svg></button>
  </div>
</header>

<nav class="tabs">
  <button class="file">文件(F)</button>
  <button>主页</button><button>装配</button><button>曲线</button><button>分析</button><button class="tail">人员</button><button>内部</button><button class="on">模圣软件</button><button>模圣设计</button>
  <div class="tabtools">
    <label class="search"><input type="text" placeholder="查找命令" aria-label="查找命令"><svg class="i"><use href="#srch"/></svg></label>
    <button aria-label="全屏"><svg class="i"><use href="#full"/></svg></button>
    <button aria-label="最小化功能区"><svg class="i"><use href="#roof"/></svg></button>
    <button aria-label="帮助"><svg class="i"><use href="#help"/></svg></button>
    <button class="tut"><svg class="i"><use href="#hat"/></svg>教程</button>
  </div>
</nav>

<section class="ribbon">
  <button class="rmenu"><svg class="i32"><use href="#menu"/></svg>菜单<svg class="dn"><use href="#down"/></svg></button>
  <span class="vr"></span>
  <div class="grp first"><div class="gb">
    <div class="s2"><button><svg class="i24"><use href="#eprog"/></svg>电极自动编程</button><button><svg class="i24"><use href="#pprog"/></svg>零件自动编程</button></div>
    <div class="s3"><button><svg class="i"><use href="#asst"/></svg>加工助手</button><button><svg class="i"><use href="#def"/></svg>透明助手</button><button><svg class="i"><use href="#ont"/></svg>ONT助手</button></div>
    <div class="s3"><button><svg class="i"><use href="#foldG"/></svg>程序组</button><button><svg class="i"><use href="#block"/></svg>切削区域</button><button><svg class="i"><use href="#layers"/></svg>切削层</button></div>
  </div><div class="gl"><span>常规</span><svg class="dn"><use href="#down"/></svg></div></div>
  <div class="grp tight"><div class="gb">
    <div class="s2"><button><svg class="i24"><use href="#tower"/></svg>模圣工具栏</button></div>
    <div class="s3"><button><svg class="i"><use href="#stand"/></svg>摆正体</button><button><svg class="i"><use href="#three"/></svg>三面定向</button><button><svg class="i"><use href="#zone"/></svg>区域保护</button></div>
    <div class="s3"><button><svg class="i"><use href="#xparam"/></svg>移除参数</button><button><svg class="i"><use href="#split"/></svg>拆分体</button><button><svg class="i"><use href="#impexp"/></svg>导入/导出</button></div>
    <div class="s3"><button><svg class="i"><use href="#layerset"/></svg>图层设置</button><button><svg class="i"><use href="#cubeX"/></svg>删除面</button><button><svg class="i"><use href="#fillet"/></svg>圆角/斜角</button></div>
    <div class="s3"><button><svg class="i"><use href="#contour"/></svg>部件轮廓</button><button><svg class="i"><use href="#water"/></svg>检查水路</button><button><svg class="i"><use href="#nest"/></svg>自动拼料</button></div>
    <button class="more"><span><svg class="i"><use href="#moreA"/></svg></span>更多<svg class="dn"><use href="#down"/></svg></button>
  </div><div class="gl"><span>建模</span><svg class="dn"><use href="#down"/></svg></div></div>
  <span class="vr"></span>
  <div class="grp tight"><div class="gb">
    <button class="big"><svg class="i32"><use href="#model"/></svg>模型分析</button>
    <div class="s3"><button aria-label="质量"><svg class="i"><use href="#kg"/></svg></button><button aria-label="体积"><svg class="i"><use href="#cubeB"/></svg></button><button aria-label="检查体"><svg class="i"><use href="#cubeB"/></svg></button></div>
    <div class="s3"><button aria-label="曲率"><svg class="i"><use href="#domes"/></svg></button><button aria-label="半径"><svg class="i"><use href="#gauge"/></svg></button><button aria-label="方向"><svg class="i"><use href="#arrows"/></svg></button></div>
    <button class="more"><span><svg class="i"><use href="#moreB"/></svg></span>更多<svg class="dn"><use href="#down"/></svg></button>
  </div><div class="gl"><span>分析</span><svg class="dn"><use href="#down"/></svg></div></div>
  <span class="vr"></span>
  <div class="grp snug"><div class="gb">
    <div class="s2"><button aria-label="电极"><svg class="i24"><use href="#elec"/></svg></button><button aria-label="基座"><svg class="i24"><use href="#tower"/></svg></button></div>
    <div class="s3"><button aria-label="标注"><svg class="i"><use href="#noteA"/></svg></button><button aria-label="夹板"><svg class="i"><use href="#plates"/></svg></button><button aria-label="链接"><svg class="i"><use href="#chain"/></svg></button></div>
    <div class="s3"><button aria-label="卡片"><svg class="i"><use href="#cards"/></svg></button><button aria-label="电极图"><svg class="i"><use href="#elec2"/></svg></button><button aria-label="方块"><svg class="i"><use href="#sqs"/></svg></button></div>
  </div><div class="gl"><span>电极工具</span><svg class="dn"><use href="#down"/></svg></div></div>
  <span class="vr"></span>
  <div class="grp"><div class="gb">
    <div class="s2"><button aria-label="电极出图"><svg class="i24"><use href="#edoc"/></svg></button><button aria-label="电极表"><svg class="i24"><use href="#etab"/></svg></button></div>
  </div><div class="gl"><span>电...</span><svg class="dn"><use href="#down"/></svg></div></div>
  <span class="vr"></span>
  <div class="grp snug"><div class="gb">
    <button class="big"><svg class="i32"><use href="#pref"/></svg>首选项</button>
    <div class="s3"><button aria-label="目录"><svg class="i"><use href="#foldx"/></svg></button><button aria-label="锁定"><svg class="i"><use href="#lock"/></svg></button><button aria-label="帮助"><svg class="i"><use href="#helpG"/></svg></button></div>
  </div><div class="gl"><span>系统</span><svg class="dn"><use href="#down"/></svg></div></div>
  <span class="vr"></span>
  <div class="grp"><div class="gb"><button class="big"><svg class="i32"><use href="#house"/></svg>关于模圣</button></div><div class="gl"><span>关于</span><svg class="dn"><use href="#down"/></svg></div></div>
  <span class="vr"></span>
  <div class="grp"><div class="gb"><button class="big"><svg class="i32 sm"><use href="#upA"/></svg>更新工具</button></div><div class="gl"><span>更新</span><svg class="dn"><use href="#down"/></svg></div></div>
  <span class="vr"></span>
  <div class="rest"><svg class="dn"><use href="#down"/></svg></div>
</section>

<section class="toolbar">
  <div class="tg tm"><button class="mb"><svg class="i"><use href="#menu"/></svg><span>菜单(<u>M</u>)</span><svg class="dn"><use href="#down"/></svg></button></div>
  <span class="vr"></span>
  <div class="tg near"><button aria-label="创建程序"><svg class="i"><use href="#t1"/></svg></button><button aria-label="创建刀具"><svg class="i"><use href="#t2"/></svg></button><button aria-label="创建几何体"><svg class="i"><use href="#t3"/></svg></button><button aria-label="创建工序"><svg class="i"><use href="#t4"/></svg></button></div>
  <span class="vr"></span>
  <div class="tg near"><button aria-label="视图一"><svg class="i"><use href="#t5"/></svg></button><button aria-label="视图二"><svg class="i"><use href="#t3"/></svg></button></div>
  <span class="vr"></span>
  <div class="tg sel">
    <span class="cb filter"><select aria-label="类型过滤器"><option>面</option></select><svg class="dn"><use href="#down"/></svg></span>
    <button aria-label="清除"><svg class="i"><use href="#ban"/></svg></button>
    <button aria-label="体"><svg class="i"><use href="#cubeG"/></svg></button>
    <button aria-label="面"><svg class="i"><use href="#face"/></svg></button>
    <button aria-label="边"><svg class="i"><use href="#cubeO"/></svg></button>
    <button aria-label="框"><svg class="i"><use href="#cubeO"/></svg></button>
    <button aria-label="曲线"><svg class="i"><use href="#curve"/></svg></button>
    <button aria-label="点"><svg class="i"><use href="#pts"/></svg></button>
    <button class="dd" aria-label="捕捉"><svg class="i"><use href="#snap"/></svg><svg class="dn"><use href="#down"/></svg></button>
    <button aria-label="旋转点"><svg class="i"><use href="#rot"/></svg></button>
    <button aria-label="层次"><svg class="i"><use href="#tree3"/></svg></button>
    <button aria-label="地形"><svg class="i"><use href="#hill"/></svg></button>
    <button aria-label="多边形"><svg class="i"><use href="#hex"/></svg></button>
    <button aria-label="隐藏体"><svg class="i"><use href="#dcube"/></svg></button>
    <button class="dd" aria-label="矩形选择"><svg class="i"><use href="#rsel"/></svg><svg class="dn"><use href="#down"/></svg></button>
    <button aria-label="高亮"><svg class="i"><use href="#sol"/></svg></button>
    <button aria-label="着色"><svg class="i"><use href="#bcube"/></svg></button>
    <span class="cb rule"><select aria-label="面规则"><option>单个面</option></select><svg class="dn"><use href="#down"/></svg></span>
    <div class="trio">
      <button aria-label="下一个"><svg class="i"><use href="#rarr"/></svg></button>
      <button class="hl" aria-label="相交处停止"><svg class="i"><use href="#selX"/></svg></button>
      <div class="pair"><button class="up" aria-label="体内"><svg class="i"><use href="#selC"/></svg></button><button class="hl dk" aria-label="面内"><svg class="i"><use href="#selR"/></svg></button>
        <svg class="cursor" width="18" height="22" viewBox="0 0 54 66"><path d="M8 6v48l12-10 7 16 9-4-7-16h16z" fill="#555" opacity=".4"/><path d="M4 2v48l12-10 7 16 9-4-7-16h16z" fill="#fff" stroke="#222" stroke-width="3"/></svg></div>
    </div>
  </div>
  <span class="vr"></span>
  <div class="tg view">
    <button aria-label="缩放"><svg class="i"><use href="#v1"/></svg></button>
    <button aria-label="平移"><svg class="i"><use href="#v2"/></svg></button>
    <button aria-label="旋转"><svg class="i"><use href="#v3"/></svg></button>
    <button aria-label="透视"><svg class="i"><use href="#v4"/></svg></button>
    <button aria-label="列表"><svg class="i"><use href="#v5"/></svg></button>
    <button class="dd" aria-label="布局"><svg class="i"><use href="#v6"/></svg><svg class="dn"><use href="#down"/></svg></button>
    <button class="dd" aria-label="渲染"><svg class="i"><use href="#v7"/></svg><svg class="dn"><use href="#down"/></svg></button>
    <div class="vpair"><button class="dd" aria-label="定向"><svg class="i"><use href="#v8"/></svg><svg class="dn"><use href="#down"/></svg></button><button class="dd" aria-label="剖切"><svg class="i"><use href="#v9"/></svg><svg class="dn"><use href="#down"/></svg></button></div>
  </div>
  <span class="vr"></span>
  <div class="rest"><svg class="dn"><use href="#down"/></svg></div>
</section>

<main>
  <nav class="rail">
    <button class="g" aria-label="设置"><svg class="i"><use href="#gear"/></svg></button>
    <button aria-label="装配导航器"><svg class="i24"><use href="#r1"/></svg></button>
    <button aria-label="约束导航器"><svg class="i24"><use href="#r2"/></svg></button>
    <button aria-label="部件导航器"><svg class="i24"><use href="#r3"/></svg></button>
    <button class="on" aria-label="工序导航器"><svg class="i24"><use href="#r4"/></svg></button>
    <button aria-label="加工特征"><svg class="i24"><use href="#r5"/></svg></button>
    <button aria-label="机床导航器"><svg class="i24"><use href="#r6"/></svg></button>
    <button aria-label="重用库"><svg class="i24"><use href="#r7"/></svg></button>
    <button aria-label="视觉报告"><svg class="i24"><use href="#r8"/></svg></button>
    <button class="sp" aria-label="信息"><svg class="i24"><use href="#r9"/></svg></button>
    <button class="sp" aria-label="浏览器"><svg class="i24"><use href="#r10"/></svg></button>
    <button class="sp" aria-label="历史记录"><svg class="i24"><use href="#r11"/></svg></button>
    <button aria-label="颜色"><svg class="i24"><use href="#r12"/></svg></button>
    <button aria-label="向导"><svg class="i24"><use href="#r13"/></svg></button>
    <button aria-label="工具"><svg class="i24"><use href="#r14"/></svg></button>
  </nav>
  <aside class="panel">
    <div class="ph"><h2>工序导航器 - 程序顺序</h2><button aria-label="最大化"></button></div>
    <div class="tree">
      <table>
        <thead><tr><th>名称</th></tr></thead>
        <tbody>
          <tr><td><div class="root">NC_PROGRAM</div></td></tr>
          <tr><td><div><svg class="br"><use href="#br"/></svg><svg class="i"><use href="#fold"/></svg><span>未用项</span></div></td></tr>
          <tr><td><div><svg class="br"><use href="#br"/></svg><svg class="i"><use href="#excl"/></svg><svg class="i"><use href="#fold"/></svg><span>PROGRAM</span></div></td></tr>
          <tr class="dim"><td><div><svg class="br"><use href="#br"/></svg><svg class="i"><use href="#no"/></svg><svg class="i"><use href="#mill"/></svg><span>FLOOR_WALL</span></div></td></tr>
          <tr class="dim"><td><div><svg class="br"><use href="#br"/></svg><svg class="i"><use href="#no"/></svg><svg class="i"><use href="#mill"/></svg><span>FACE_MILLING_MANUAL</span></div></td></tr>
          <tr class="cur"><td><div><svg class="br"><use href="#br"/></svg><svg class="i"><use href="#no"/></svg><svg class="i"><use href="#mill"/></svg><span>FACE_MILLING</span></div></td></tr>
          <tr class="dim"><td><div><svg class="br"><use href="#br"/></svg><svg class="i"><use href="#no"/></svg><svg class="i"><use href="#cav"/></svg><span>CAVITY_MILL</span></div></td></tr>
          <tr class="dim"><td><div><svg class="br"><use href="#br"/></svg><svg class="i"><use href="#no"/></svg><svg class="i"><use href="#cav"/></svg><span>REST_MILLING</span></div></td></tr>
          <tr class="dim"><td><div><svg class="br"><use href="#br"/></svg><svg class="i"><use href="#no"/></svg><svg class="i"><use href="#cav"/></svg><span>ZLEVEL_PROFILE</span></div></td></tr>
          <tr class="dim"><td><div><svg class="br"><use href="#brl"/></svg><svg class="i"><use href="#no"/></svg><svg class="i"><use href="#cav"/></svg><span>PLUNGE_MILLING</span></div></td></tr>
        </tbody>
      </table>
      <div class="blank"></div>
      <div class="sb"><svg class="ar"><use href="#tl"/></svg><i class="thumb small"></i><svg class="ar end"><use href="#tr"/></svg></div>
    </div>
    <div class="splitter"></div>
    <button class="acc">相关性<svg class="chev"><use href="#chevD"/></svg></button>
    <button class="acc">细节<svg class="chev"><use href="#chevD"/></svg></button>
  </aside>
  <section class="canvas">
    <svg class="scene" viewBox="302 202 1298 674" preserveAspectRatio="xMinYMin meet">
      <g transform="translate(780 310) scale(.33333)" stroke-linejoin="round">
        <g fill="#f51414" stroke="#5a1010" stroke-width="2">
          <path d="M96 312l58 5 4 6-2 220-12 88-72-6q-3-2-2-8l2-32q1-6 8-5l45 2 6-115-46-1q-5-1-5-6l8-140q2-9 8-8z"/>
          <path d="M664 355l58 4q7 1 6 8l-9 142q-1 6-6 6l-48-2-3 112 44 2q5 1 4 6l-3 36q-1 6-6 5l-60-6 14-270z"/>
        </g>
        <path d="M70 628l574 40 62 6-62-3L145 634z" fill="#333"/>
        <path d="M160 361l98 8 4-92 306 22-5 91 94 8-13 270-498-34z" fill="#404646" stroke="#222" stroke-width="2"/>
        <path d="M275 300l276 20-6 76-272-18z" fill="#c8c8c8" stroke="#777" stroke-width="2"/>
        <path d="M166 380l84 4q4 14 20 12l272 16 14 10 94-4-8 162-4 68-30 10-104-8-10-8-104-6-14-8-90-6-14-6-116-8 4-20-4-8 6-120z" fill="#c5d6da"/>
        <path d="M273 380l90 6 188 14" stroke="#222" stroke-width="3" fill="none"/>
        <path d="M162 360l96 8 4-88 303 22-5 88 96 8-15 252-493-34z" fill="none" stroke="#222" stroke-width="5"/>
        <path d="M162 362l96 7 4-88 303 21-5 88 96 8-15 253-493-34z" fill="none" stroke="#ece83a" stroke-width="3"/>
        <path d="M285 291l110 8m30 2l110 8" stroke="#a58a9a" stroke-width="3" stroke-dasharray="20 8"/>
        <g fill="#333c3c" stroke="#222" stroke-width="2"><circle cx="258" cy="387" r="10"/><circle cx="552" cy="408" r="10"/><circle cx="410" cy="315" r="9"/><circle cx="195" cy="434" r="8"/><circle cx="272" cy="619" r="9"/><circle cx="392" cy="628" r="9"/><circle cx="513" cy="637" r="9"/><circle cx="150" cy="437" r="8"/><circle cx="147" cy="485" r="8"/><circle cx="152" cy="592" r="9"/><circle cx="640" cy="452" r="8"/><circle cx="634" cy="610" r="9"/><circle cx="652" cy="570" r="8"/><circle cx="655" cy="523" r="7"/><circle cx="645" cy="438" r="7"/><circle cx="557" cy="398" r="7"/><circle cx="275" cy="300" r="9"/><circle cx="550" cy="322" r="9"/></g>
        <g fill="#8c1010" stroke="#222" stroke-width="2"><circle cx="131" cy="334" r="4"/><circle cx="97" cy="374" r="4"/><circle cx="142" cy="378" r="4"/><circle cx="95" cy="445" r="4"/><circle cx="81" cy="612" r="4"/><circle cx="127" cy="616" r="4"/><circle cx="684" cy="377" r="4"/><circle cx="667" cy="418" r="4"/><circle cx="713" cy="421" r="4"/><circle cx="705" cy="492" r="4"/><circle cx="652" cy="655" r="4"/><circle cx="697" cy="660" r="4"/></g>
        <path d="M150 525h16v14h-16zM620 563h20v12h-20z" fill="#1c8a40" stroke="#142" stroke-width="3"/>
        <circle cx="397" cy="472" r="8" fill="#444"/>
        <g fill="none" stroke="#3038c8" stroke-width="3"><path d="M420 265l196 15-9 188M418 415l198 15-8 38" stroke-dasharray="22 3"/><path d="M427 80v80M430 160l-6 240"/><path d="M402 465l18-62" stroke="#1525a0" stroke-width="8"/><path d="M384 461l22 4v14" stroke="#1525b0" stroke-width="7"/><path d="M700 484l60 4"/></g>
        <path d="M404 460l12-250" stroke="#36a850" stroke-width="7"/><path d="M422 160l-13 58h22z" fill="#3da550"/>
        <path d="M428 72l-10 46h19z" fill="#0d12d8"/><path d="M405 460l295 16" stroke="#c93a44" stroke-width="6"/><path d="M640 474l80 10-80 2z" fill="#a51a20"/>
        <path d="M756 478l48 12-50 8z" fill="#0d12d8"/><circle cx="421" cy="402" r="10" fill="#0a1060"/><circle cx="428" cy="378" r="8" fill="#0d12a8"/><circle cx="607" cy="466" r="7" fill="#1525a0"/>
      </g>
      <g class="ax"><text x="918" y="332" fill="#2430c0">Y</text><text x="899" y="361" fill="#3c8c44">YM</text><text x="903" y="440" fill="#2d62d8">ZM</text><text x="919" y="436" fill="#2430c0">Z</text><text x="1050" y="479" fill="#2430c0">X</text><text x="1002" y="486" fill="#d04848">XM</text></g>
      <g transform="translate(1080 390) scale(.33333)" stroke="#222" stroke-width="2" stroke-linejoin="round">
        <path d="M118 70L100 130 84 380l20-58z" fill="#77857f"/><path d="M118 70l112 8-17 252-109-8z" fill="#e8fffa"/><path d="M230 78l120 40-16 254-121-42z" fill="#b6d0c2"/><path d="M352 130l217 23-2 12-217-16z" fill="#6d7b75"/><path d="M350 149l216 16-16 240-216-23z" fill="#e8fffc"/><path d="M566 165l3-12-19 262v-10z" fill="#8c9b95"/><path d="M104 322l109 8 121 42v10l216 23v11L84 380z" fill="#47524c"/>
        <g fill="none"><path d="M84 742q-10 2-14 12L55 812 40 1052M84 742l455 36-17 254-16 56-466-36 18-56 464 36M66 804l455 32 18-58M66 804l-8 192M521 836l-15 252M118 780l384 30-12 184-14 52L86 1012q-6-2-4-10l10-38 9-140q2-36 17-44z"/></g>
        <path d="M84 742l455 36-18 58-455-32q6-60 18-62z" fill="#bbb" fill-opacity=".55"/><path d="M58 996l464 36-16 56-466-36z" fill="#aaa" fill-opacity=".7"/><path d="M118 780l384 30-4 20-390-26q2-22 10-24z" fill="#8f8f8f"/><path d="M108 804l392 27-12 26-386-30z" fill="#b3b3b3"/><path d="M94 964l396 30-14 52-392-34z" fill="#ccc" fill-opacity=".5"/><path d="M102 827l386 30v14l-386-28z" fill="#ececec" stroke="none"/><path d="M104 843l382 28M102 827l-8 137M488 857l-10 136" fill="none" stroke-width="3"/><path d="M66 804l-11 8-15 240 18-56z" fill="#aaa" fill-opacity=".4"/>
      </g>
      <g transform="translate(320 750) scale(.33333)"><path d="M116 126l70 4-8 78-66-6z" fill="#ddd" stroke="#999" stroke-width="2"/><path d="M118 142l64 4M116 190l62 6M176 130l-6 76" stroke="#bbb" stroke-width="3"/><path d="M110 204l6-86" stroke="#1d8a2c" stroke-width="5"/><path d="M118 94l-9 32h16z" fill="#1fa030"/><path d="M112 206l80 4" stroke="#c83030" stroke-width="5"/><path d="M188 202l34 11-34 7z" fill="#d02020"/><path d="M110 204l10-26" stroke="#1436b8" stroke-width="7"/><circle cx="111" cy="206" r="13" fill="#c4c8cc"/><path d="M106 178l22 8-8 12z" fill="#1436b8"/></g>
      <g class="ax sm2"><text x="355" y="782" fill="#2c9434">Y</text><text x="356" y="811" fill="#2448d0">Z</text><text x="394" y="826" fill="#d03030">X</text></g>
    </svg>

    <form class="dialog" aria-label="毛坯边界">
      <div class="dt"><svg class="i"><use href="#gear"/></svg><h2>毛坯边界</h2><button type="button" aria-label="重置"><svg class="i"><use href="#reset"/></svg></button><button type="button" aria-label="关闭"><svg class="i"><use href="#close"/></svg></button></div>
      <section class="sec">
        <h3>边界<svg class="chev"><use href="#chevU"/></svg></h3>
        <div class="rows">
          <div class="row"><label for="method">选择方法</label><span class="cb focus"><svg class="i ic"><use href="#redf"/></svg><select id="method"><option>面</option></select><svg class="dn"><use href="#down"/></svg></span></div>
          <div class="pick"><span>选择面 (0)</span><button type="button" aria-label="选择面"><svg class="i24"><use href="#facecube"/></svg></button></div>
          <div class="row"><label for="side">刀具侧</label><span class="cb"><select id="side"><option>内侧</option></select><svg class="dn"><use href="#down"/></svg></span></div>
          <div class="row"><label for="plane">平面</label><span class="cb"><select id="plane"><option>自动</option></select><svg class="dn"><use href="#down"/></svg></span></div>
          <div class="box custom"><h4>定制边界数据<svg class="chev"><use href="#chevU"/></svg></h4>
            <label class="ck"><input type="checkbox">余量</label>
            <label class="ck"><input type="checkbox">切削进给率</label></div>
          <div class="add"><span>添加新集</span><button type="button" aria-label="添加新集"><svg class="i"><use href="#addset"/></svg></button></div>
          <div class="box"><h4>列表<svg class="chev"><use href="#chevU"/></svg></h4>
            <div class="lst"><div class="frame"><table class="a"><colgroup><col class="c1"><col class="c2"><col class="c2"><col></colgroup><thead><tr><th>方法</th><th>类型</th><th>刀具侧</th><th></th></tr></thead><tbody><tr class="cur"><td>新建</td><td></td><td></td><td></td></tr><tr class="alt"><td></td><td></td><td></td><td></td></tr><tr><td></td><td></td><td></td><td></td></tr><tr class="alt short"><td></td><td></td><td></td><td></td></tr></tbody></table></div>
            <button type="button" class="del" aria-label="移除"><svg class="i"><use href="#close"/></svg></button></div></div>
        </div>
      </section>
      <section class="sec">
        <h3>成员<svg class="chev"><use href="#chevU"/></svg></h3>
        <div class="rows"><div class="box"><h4>列表<svg class="chev"><use href="#chevU"/></svg></h4>
          <div class="lst"><div class="frame"><table class="b"><colgroup><col class="c3"><col class="c4"><col></colgroup><thead><tr><th>项</th><th>余量</th><th>连接</th></tr></thead><tbody><tr><td></td><td></td><td></td></tr><tr class="alt"><td></td><td></td><td></td></tr><tr><td></td><td></td><td></td></tr></tbody></table>
          <div class="sb"><svg class="ar"><use href="#tl"/></svg><i class="thumb wide"><b></b><b></b><b></b></i><svg class="ar end"><use href="#tr"/></svg></div></div></div></div></div>
      </section>
      <div class="act"><button type="submit" class="ok">确定</button><button type="button">取消</button></div>
    </form>
  </section>
</main>
<footer><span>选择面</span><button aria-label="全屏"><svg class="i"><use href="#full"/></svg></button></footer>
<div class="taskedge"></div>
</body>
</html>
```
FILE: styles.css
```css
*{box-sizing:border-box}
html,body{height:100%}
body{margin:0;display:flex;flex-direction:column;background:#fff;color:#1e1e1e;font:12px/16px "Noto Sans","Noto Sans CJK SC",sans-serif;overflow:hidden;white-space:nowrap}
button,input,select{font:inherit;color:inherit}
button{border:0;background:none;padding:0;display:flex;align-items:center;justify-content:center}
h1,h2,h3,h4{margin:0;font-weight:400}
svg{display:block;flex:none}
.defs{position:absolute;width:0;height:0}
.i{width:16px;height:16px}
.i24{width:24px;height:24px}
.i32{width:32px;height:32px}
.dn{width:6px;height:4px;color:#111}
.dn.dim{color:#888}
.chev{width:12px;height:10px}
.vr{flex:none;width:1px;background:#d0d0d0;margin:5px 0 4px}

.titlebar{display:flex;flex:none;height:28px;align-items:center}
.nx{width:42px;padding-left:3px;font:bold 23px/28px "Liberation Sans",Arial,sans-serif;color:#7893a1}
.quick{display:flex;align-items:center;height:22px;border-left:1px solid #d0d0d0;gap:8px;flex:none}
.quick button{gap:4px}
.q1{width:32px;padding-left:9px}
.q2{width:41px;padding-left:7px}
.q3{width:75px;padding-left:7px}
.q4{width:41px;padding-left:6px}
.q5{width:29px;padding-left:6px}
.q6{padding-left:6px}
.off{color:#bbb}
.ov{margin-left:-4px}
.titlebar h1{flex:1;text-align:center;font-size:14px;line-height:18px;color:#111}
.brand{display:flex;align-items:center;gap:12px;padding-right:7px}
.brand strong{font:bold 14px/18px "Noto Sans",sans-serif;color:#0d918d;margin-right:13px}

.tabs{display:flex;flex:none;height:29px;background:#dcdcdc;font-size:14px}
.tabs>button{padding:0 13px;flex:none}
.tabs>.file{width:85px;background:#55a0b8;color:#fff;font-size:13px;margin-right:2px;padding:0 4px 0 0}
.tabs>.tail{margin-left:325px}
.tabs>.on{background:#fff;color:#0f6385;border-top:2px solid #bbb}
.tabtools{margin-left:auto;display:flex;align-items:center;padding-right:9px;gap:10px;font-size:12px}
.search{display:flex;align-items:center;width:140px;height:21px;border:1px solid #a8a8a8;background:#fff;padding-right:2px}
.search input{flex:1;min-width:0;border:0;padding:0 1px;outline:0;background:none}
.search input::placeholder{color:#a8a8a8}
.tut{gap:4px}

.ribbon{display:flex;flex:none;height:97px;border-bottom:1px solid #d8d8d8}
.rmenu{width:49px;flex-direction:column;justify-content:flex-start;padding:9px 0 0 2px}
.rmenu .i32{margin-bottom:1px}
.rmenu .dn{margin-top:4px}
.grp{display:flex;flex-direction:column;flex:none}
.grp.first{width:512px}
.gb{display:flex;flex:1;gap:10px;padding:0 10px 0 12px;color:#bfbfbf}
.tight .gb{padding-right:4px}
.snug .gb{padding-right:8px}
.gb button{justify-content:flex-start;gap:4px}
.s3{display:grid;grid-template-rows:repeat(3,23px);padding-top:2px}
.s2{display:grid;grid-template-rows:repeat(2,35px);padding-top:4px}
.gb .big{flex-direction:column;padding-top:4px;gap:4px}
.gb .big .sm{padding:6px}
.gb .more{flex-direction:column;color:#1e1e1e;width:37px;padding-top:4px}
.gb .more{gap:3px}
.more span{width:37px;height:35px;border:1px solid #d4d4d4;border-radius:3px;display:flex;align-items:center;justify-content:center}
.gl{display:flex;align-items:center;height:18px;color:#0f6385;padding-right:8px}
.gl span{flex:1;text-align:center;padding-right:4px}
.rest{flex:1;display:flex;justify-content:flex-end;align-items:flex-end;padding:0 6px 8px 0}

.toolbar{display:flex;flex:none;height:48px;border-bottom:1px solid #8c8c8c}
.tg{display:flex;align-items:center;gap:9px;padding:0 11px 0 13px;flex:none}
.tm{width:89px;padding:0 0 0 10px}
.mb{gap:4px}
.near{gap:8px}
.sel{padding-right:5px}
.view{padding-right:9px}
.dd{width:26px;gap:4px;justify-content:flex-start}
.cb{position:relative;display:flex;align-items:center;border:1px solid #a6a6a6;background:#fff;flex:none}
.cb select{appearance:none;border:0;background:none;flex:1;width:100%;height:100%;padding:0 20px 0 3px;outline:0}
.cb>.dn{position:absolute;right:5px;width:8px;height:5px;pointer-events:none}
.filter{width:360px;height:22px}
.rule{width:157px;height:22px}
.trio{display:flex;align-items:center;gap:4px}
.hl{width:23px;height:22px;background:#cfe8ec;border:1px solid #b4d8de}
.hl.dk{background:#8fc4cf;border-color:#7fb8c4}
.pair{position:relative;display:flex;flex-direction:column;align-items:center;gap:1px;padding-top:4px}
.up{height:18px}
.cursor{position:absolute;left:6px;top:30px;z-index:3}
.vpair{display:flex;flex-direction:column;gap:6px;padding-left:5px}
.vpair .dd{gap:7px}

main{flex:1;display:flex;min-height:0}
.rail{width:32px;flex:none;background:#dcdcdc;border-right:1px solid #a9a9a9;display:flex;flex-direction:column}
.rail button{height:42px;flex:none;padding-left:5px}
.rail .g{height:26px;margin-bottom:16px;padding:0 2px 0 0;color:#333}
.rail .on{height:46px;margin:-2px -1px -2px 2px;padding-left:2px;background:#fff;border:1px solid #a9a9a9;border-right:0}
.rail .sp{margin-top:12px}
.panel{width:270px;flex:none;border-right:1px solid #8c8c8c;padding:0 9px 6px 6px;display:flex;flex-direction:column}
.ph{height:28px;display:flex;align-items:center;justify-content:space-between;padding:2px 7px 0 4px;flex:none}
.ph h2{font-size:13px;line-height:18px}
.ph button{width:12px;height:11px;border:1px solid #111;border-top-width:2px}
.tree{flex:1;display:flex;flex-direction:column;border:1px solid #d4d4d4;padding:1px;min-height:0}
table{border-collapse:collapse;width:100%;table-layout:fixed}
th,td{padding:0;font-weight:400;text-align:left}
.tree th{height:21px;background:#eee;padding:1px 0 0 6px;border-bottom:1px solid #ccc}
.tree td{height:20px;border-bottom:1px solid #e6e6e6}
.tree tr:nth-child(even) td{background:#fafafa}
.tree td div{display:flex;align-items:center;height:19px;padding-left:9px}
.tree td .root{padding-left:3px}
.tree td span{padding-left:3px;flex:1}
.br{width:10px;height:20px}
.dim{color:#8cb09c}
.cur span{background:#8bc0cf;line-height:19px}
.blank{flex:1;background:repeating-linear-gradient(#fff 0 19px,#e6e6e6 19px 20px,#fafafa 20px 39px,#e6e6e6 39px 40px)}
.sb{display:flex;align-items:center;height:16px;background:#eee;padding:0 6px;flex:none}
.ar{width:5px;height:8px}
.end{margin-left:auto}
.thumb{height:15px;border:1px solid #8f8f8f;border-radius:1px;background:linear-gradient(#f6f6f6,#e2e2e2 48%,#cfcfcf 52%,#dcdcdc);display:flex;align-items:center;justify-content:center;gap:2px}
.small{width:15px;margin-left:7px}
.wide{width:249px;margin-left:7px}
.thumb b{width:1px;height:7px;background:#555}
.splitter{height:5px;border:1px solid #aaa;background:#ddd;flex:none}
.acc{height:25px;flex:none;justify-content:space-between;border-bottom:2px solid #d4d4d4;padding:0 6px 0 7px;font-size:15px;line-height:20px;color:#0f6385}

.canvas{position:relative;flex:1;min-width:0;background:linear-gradient(#fff 23px,#5b9db0 23px 25px,#fff 25px)}
.scene{width:100%;height:100%}
.ax{font:15px "Liberation Sans",Arial,sans-serif}
.sm2{font-size:13px}

.dialog{position:absolute;left:0;top:-179px;width:346px;background:#efefef;border:solid #d2d2d2;border-width:0 1px 1px;z-index:2;font-size:13px;line-height:18px}
.dt{height:25px;margin:0 -1px;background:#559fb8;color:#fff;display:flex;align-items:center;padding:0 8px;gap:5px}
.dt h2{flex:1;font-size:15px;line-height:20px;padding:0 0 1px 2px}
.sec{background:#fff;margin:4px 5px 0;border-bottom:1px solid #c4c4c4;padding-bottom:7px}
.sec h3{display:flex;align-items:center;justify-content:space-between;height:27px;padding:0 6px 3px 7px;font-size:15px;line-height:20px;color:#0f6385}
.rows{padding:4px 9px 0;display:flex;flex-direction:column;gap:2px}
.row{display:flex;align-items:center;justify-content:space-between}
.row .cb{width:152px;height:27px}
.focus{padding:2px 19px 2px 2px}
.focus select{background:#afd7df;border:1px dotted #222;padding:0 4px 0 20px}
.ic{position:absolute;left:5px}
.pick{display:flex;height:32px;gap:2px}
.pick span{flex:1;background:#fde072;line-height:30px}
.pick button{width:32px;background:#fde072}
.box{border:1px solid #d8d8d8;background:#efefef;padding:0 8px 8px}
.box h4{display:flex;align-items:center;justify-content:space-between;height:26px;color:#0f6385;font-size:13px;padding-bottom:2px}
.box h4 .chev{margin-right:-2px}
.custom{height:89px}
.ck{display:flex;align-items:center;height:25px;gap:5px}
.custom h4{margin-bottom:4px}
.ck input{appearance:none;margin:0;width:13px;height:13px;border:1px solid #8e8e8e;background:linear-gradient(135deg,#c8c8c8,#fff);box-shadow:inset 0 0 0 2px #f2f2f2}
.add{display:flex;align-items:center;justify-content:space-between;height:24px;color:#b0b0b0}
.add button{width:24px;height:24px;border:1px solid #d0d0d0;background:#fff}
.lst{display:flex;gap:2px;align-items:flex-start;padding-top:5px;font-size:12px;line-height:16px}
.frame{flex:1;height:100px;border:1px solid #d8d8d8;background:#fff;padding:1px 2px 0 1px;overflow:hidden}
.frame th{height:21px;background:#efefef;border-right:1px solid #ccc;border-bottom:1px solid #ccc;padding-left:6px}
.frame td{height:20px;border-right:1px solid #e6e6e6;border-bottom:1px solid #e6e6e6;padding-left:3px}
.frame .alt td{background:#fafafa}
.frame .cur td{background:#8bc0cf;border-color:#c4e0e8}
.c1{width:51px}
.c2{width:100px}
.c3{width:69px}
.c4{width:145px}
.frame .short td{height:16px}
.b tr:last-child td{height:18px}
.del{width:24px;height:24px;border:1px solid #a0a0a0;flex:none}
.act{display:flex;justify-content:flex-end;gap:5px;padding:11px 15px 10px}
.act button{width:56px;height:27px;border:1px solid #a6a6a6;background:#dcdcdc}
.act .ok{background:#70b3c6;border-color:#70b3c6;color:#fff}

footer{display:flex;flex:none;justify-content:space-between;align-items:center;height:22px;border-top:1px solid #a6a6a6;padding:0 55px 0 3px}
footer span{font-weight:500;padding-bottom:3px}
.taskedge{height:2px;flex:none;background:linear-gradient(#123246 1px,#9fc0d6 1px)}
```
